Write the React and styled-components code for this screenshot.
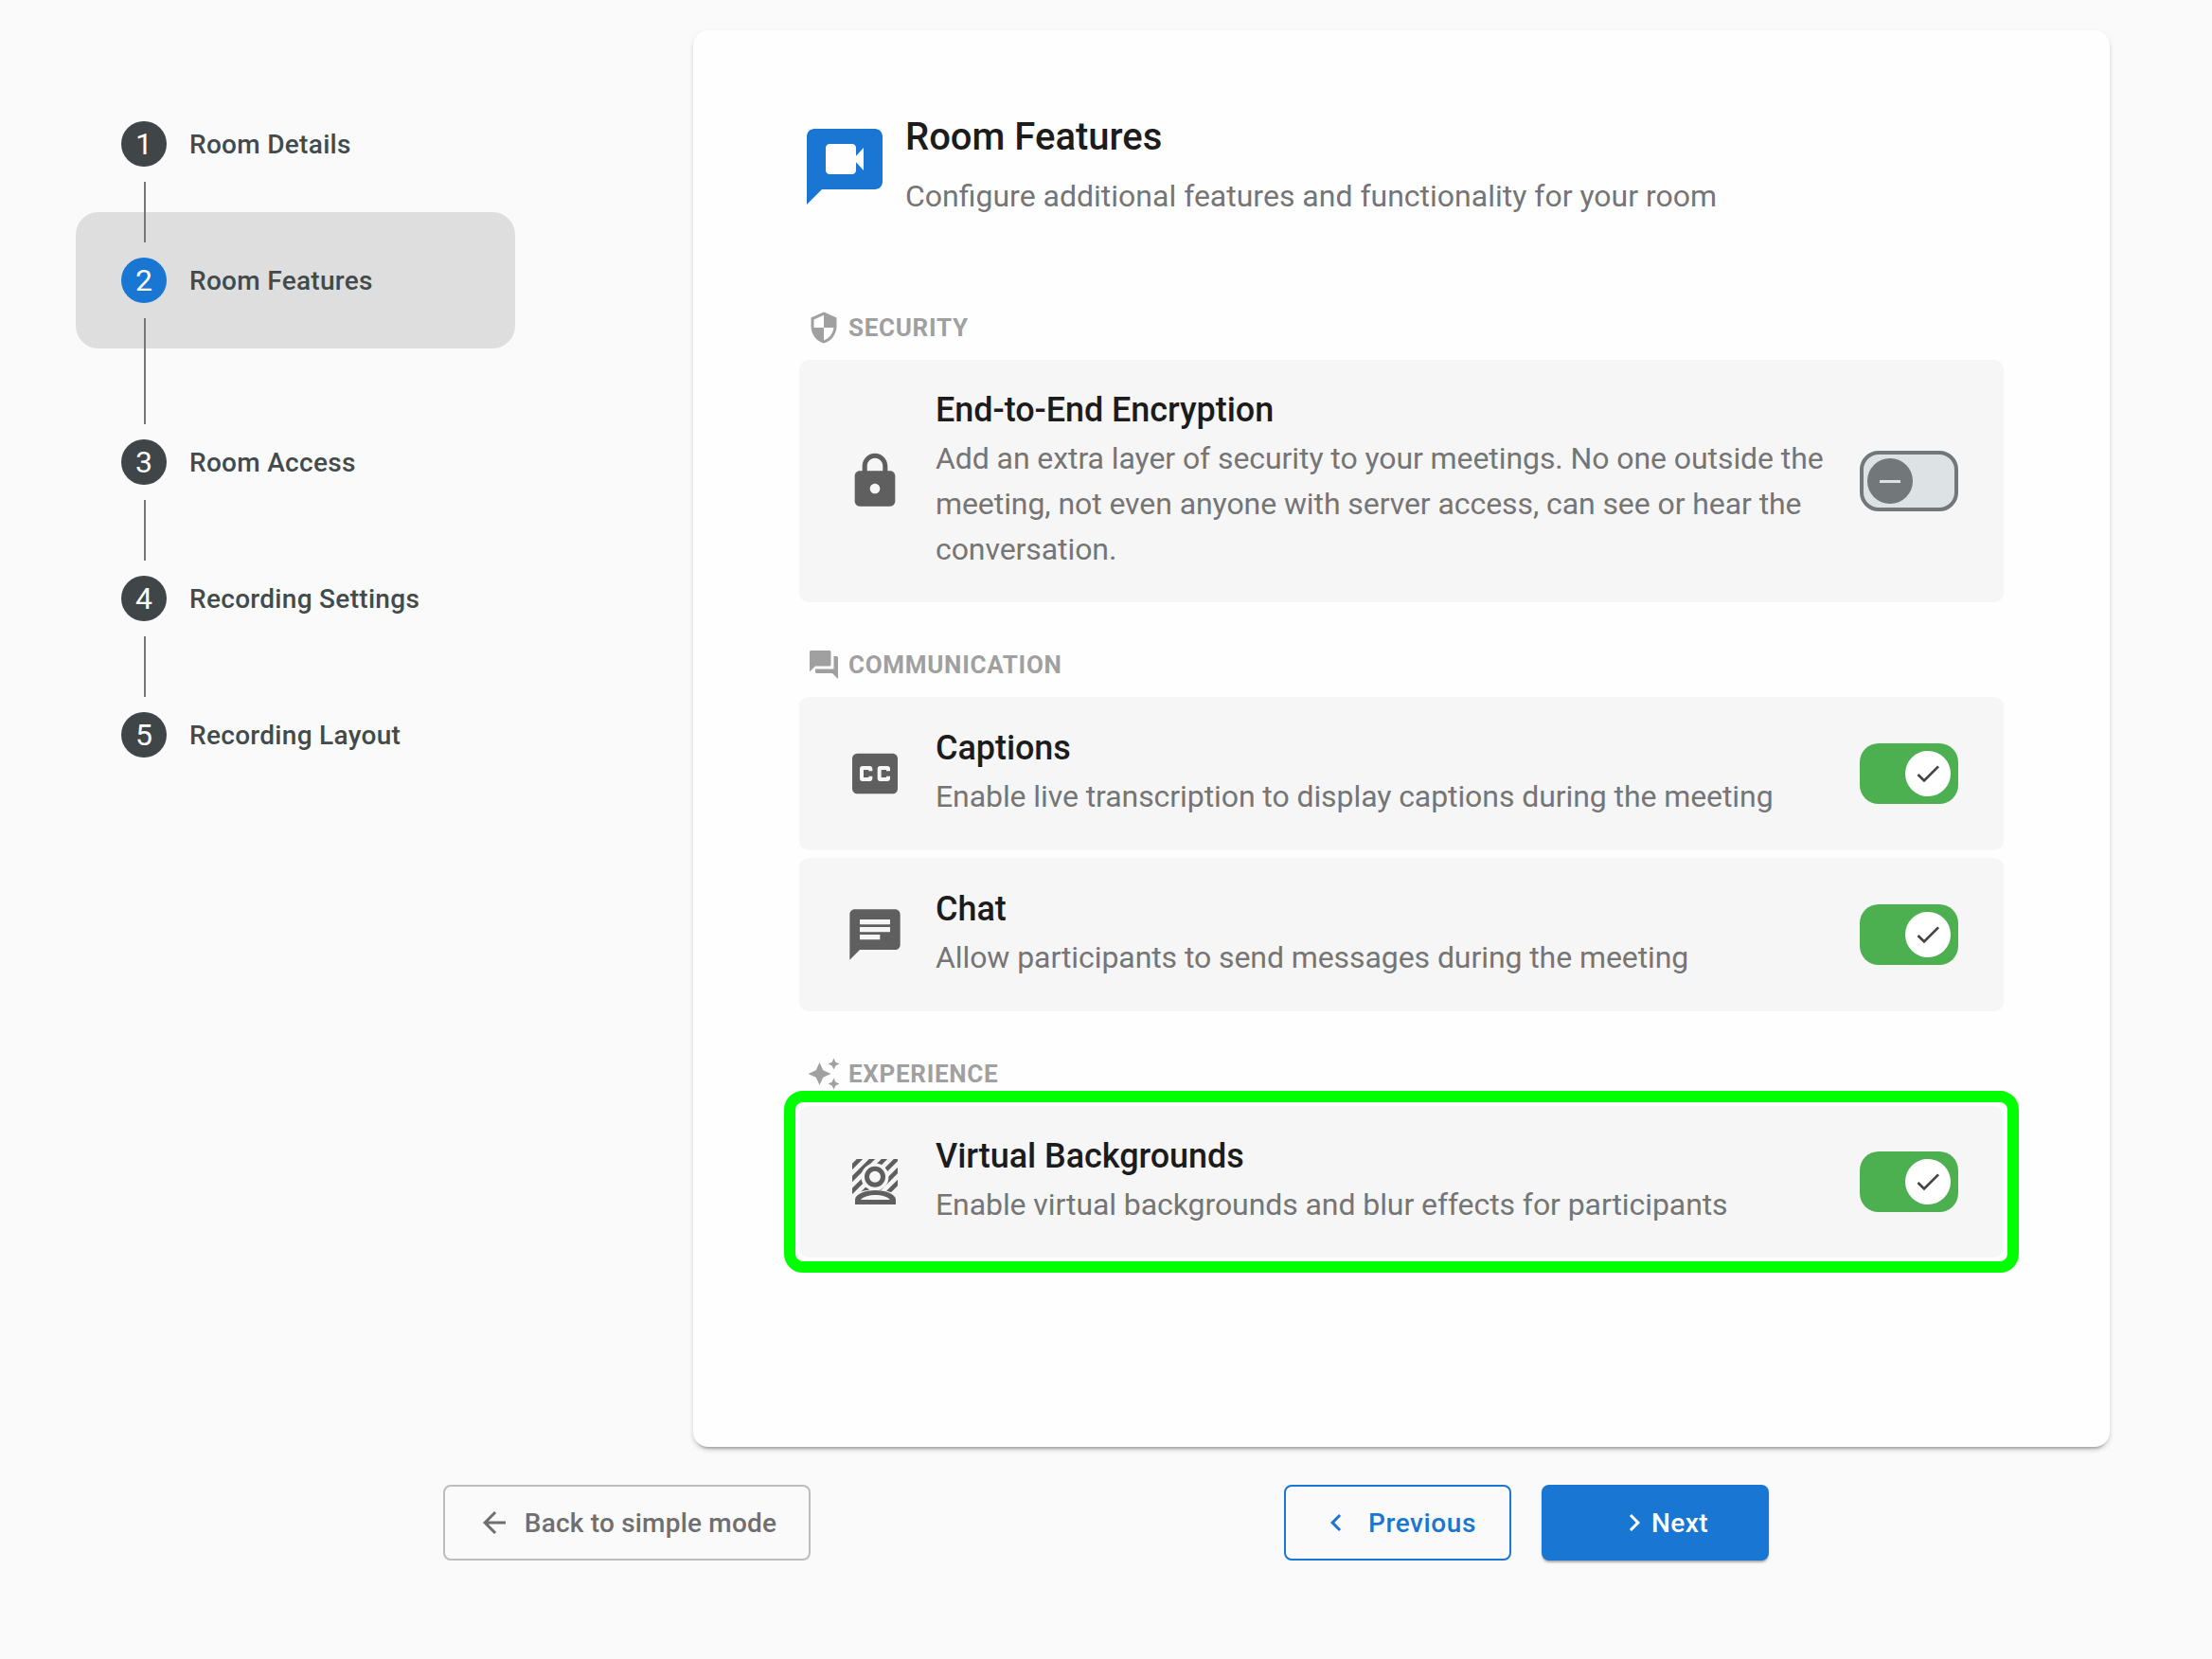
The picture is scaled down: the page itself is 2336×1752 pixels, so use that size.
import React from 'react';
import styled, { createGlobalStyle } from 'styled-components';
import {
  MdArrowBack,
  MdAutoAwesome,
  MdChat,
  MdCheck,
  MdChevronLeft,
  MdChevronRight,
  MdClosedCaption,
  MdForum,
  MdLock,
  MdSecurity,
} from 'react-icons/md';

const GlobalStyle = createGlobalStyle`
  html, body {
    margin: 0;
    padding: 0;
    background: #fafafa;
    font-family: Roboto, "Liberation Sans", sans-serif;
  }
  * {
    box-sizing: border-box;
  }
`;

const Page = styled.div`
  width: 2336px;
  height: 1752px;
  padding-top: 32px;
  background: #fafafa;
`;

const Main = styled.div`
  display: flex;
  align-items: flex-start;
  padding-left: 80px;
`;

const Sidebar = styled.nav`
  width: 464px;
  margin-right: 188px;
  padding-top: 48px;
  flex-shrink: 0;
`;

const Step = styled.div`
  position: relative;
  display: flex;
  align-items: center;
  gap: 24px;
  height: 144px;
  padding-left: 48px;
  border-radius: 24px;
  background: ${props => (props.$active ? '#dedede' : 'transparent')};
  margin-bottom: ${props => (props.$active ? '48px' : '0')};

  ${props => props.$line && `
    &::after {
      content: '';
      position: absolute;
      left: 72px;
      top: 112px;
      width: 2px;
      height: ${props.$line}px;
      background: #72787a;
      z-index: 1;
    }
  `}
`;

const StepNumber = styled.div`
  width: 48px;
  height: 48px;
  border-radius: 50%;
  display: flex;
  align-items: center;
  justify-content: center;
  flex-shrink: 0;
  font-size: 32px;
  color: #fff;
  background: ${props => (props.$active ? '#1976d2' : '#404648')};
`;

const StepLabel = styled.span`
  font-size: 28px;
  font-weight: 500;
  letter-spacing: 0.3px;
  color: #424a4c;
`;

const Card = styled.section`
  width: 1496px;
  height: 1496px;
  padding: 96px 112px 0;
  background: #fefefe;
  border-radius: 16px;
  box-shadow: 0 6px 2px -4px rgba(0, 0, 0, 0.2), 0 4px 4px 0 rgba(0, 0, 0, 0.1), 0 2px 6px 0 rgba(0, 0, 0, 0.08);
`;

const Header = styled.header`
  display: flex;
  gap: 16px;
  margin-bottom: 97px;
`;

const HeaderText = styled.div`
  display: flex;
  flex-direction: column;
`;

const Title = styled.h2`
  margin: 0;
  font-size: 40px;
  line-height: 34px;
  font-weight: 500;
  color: #1c1c1c;
`;

const Subtitle = styled.p`
  margin: 21px 0 0;
  font-size: 32px;
  line-height: 48px;
  color: #757575;
`;

const Section = styled.div`
  display: flex;
  flex-direction: column;
  gap: 8px;
  margin-bottom: 48px;
`;

const SectionHead = styled.div`
  display: flex;
  align-items: center;
  gap: 8px;
  padding-left: 8px;
  margin-bottom: 8px;
  color: #a0a0a0;
`;

const SectionLabel = styled.span`
  font-size: 26px;
  font-weight: 700;
  letter-spacing: 0.7px;
  color: #a0a0a0;
`;

const Row = styled.div`
  position: relative;
  display: flex;
  align-items: center;
  gap: 32px;
  min-height: ${props => (props.$highlight ? 160 : 162)}px;
  padding: 0 48px;
  background: #f6f6f6;
  border-radius: 10px;
  color: #5f5f5f;

  ${props => props.$highlight && `
    &::after {
      content: '';
      position: absolute;
      inset: -16px;
      border: 12px solid #00ff00;
      border-radius: 20px;
      pointer-events: none;
    }
  `}
`;

const RowText = styled.div`
  flex: 1;
  min-width: 0;
  padding: 30px 0 32px;
`;

const RowTitle = styled.div`
  font-size: 36px;
  line-height: 46px;
  margin-bottom: 4px;
  font-weight: 500;
  letter-spacing: -0.06px;
  color: #1c1c1c;
`;

const RowDescription = styled.div`
  font-size: 32px;
  line-height: 48px;
  letter-spacing: -0.08px;
  color: #757575;
`;

const Toggle = styled.div`
  width: 104px;
  height: 64px;
  flex-shrink: 0;
  display: flex;
  align-items: center;
  justify-content: ${props => (props.$on ? 'flex-end' : 'flex-start')};
  padding: 0 ${props => (props.$on ? 8 : 4)}px;
  border-radius: 20px;
  background: ${props => (props.$on ? '#4caf50' : '#dde3e5')};
  border: ${props => (props.$on ? 'none' : '4px solid #72787a')};
`;

const Thumb = styled.div`
  width: 48px;
  height: 48px;
  border-radius: 50%;
  display: flex;
  align-items: center;
  justify-content: center;
  background: ${props => (props.$on ? '#fff' : '#72787a')};
  color: #444;
`;

const Minus = styled.div`
  width: 22px;
  height: 3px;
  background: #dde3e5;
`;

const Footer = styled.footer`
  width: 1400px;
  margin: 40px auto 0;
  display: flex;
  justify-content: space-between;
`;

const FooterGroup = styled.div`
  display: flex;
  gap: 32px;
`;

const Button = styled.button`
  height: 80px;
  width: 240px;
  display: flex;
  align-items: center;
  justify-content: center;
  border-radius: 8px;
  font-family: inherit;
  font-size: 28px;
  font-weight: 500;
  background: transparent;
  padding: 0;
`;

const BackButton = styled(Button)`
  width: 388px;
  gap: 14px;
  letter-spacing: 0.2px;
  border: 2px solid #bdbdbd;
  color: #6f6f6f;
`;

const PreviousButton = styled(Button)`
  gap: 16px;
  letter-spacing: 0.6px;
  border: 2px solid #1976d2;
  color: #1976d2;
`;

const NextButton = styled(Button)`
  gap: 0;
  padding-left: 16px;
  letter-spacing: 0.4px;
  border: none;
  background: #1976d2;
  color: #fff;
  box-shadow: 0 3px 2px -1px rgba(0, 0, 0, 0.2), 0 2px 3px 0 rgba(0, 0, 0, 0.14);
`;

const RoomIcon = () => (
  <svg width="96" height="96" viewBox="0 0 24 24" fill="#1976d2">
    <path
      fillRule="evenodd"
      d="M20 2H4c-1.1 0-1.99.9-1.99 2L2 22l4-4h14c1.1 0 2-.9 2-2V4c0-1.1-.9-2-2-2zM8 6h6c.55 0 1 .45 1 1v2.2L17 7v6l-2-2.2V13c0 .55-.45 1-1 1H8c-.55 0-1-.45-1-1V7c0-.55.45-1 1-1z"
    />
  </svg>
);

const VirtualBackgroundIcon = () => (
  <svg width="64" height="64" viewBox="-8 -8 64 64" fill="none">
    <defs>
      <clipPath id="hatch">
        <rect x="0" y="0" width="48" height="40" />
      </clipPath>
    </defs>
    <g clipPath="url(#hatch)" stroke="#5f5f5f" strokeWidth="4.5">
      <path d="M-8 16L16 -8M-8 29L29 -8M-8 42L42 -8M5 42L55 -8M18 42L68 -8M31 42L81 -8" />
    </g>
    <circle cx="24" cy="19" r="14.5" fill="#f6f6f6" />
    <path d="M-2 48V40C8 30 40 30 50 40V48Z" fill="#f6f6f6" />
    <circle cx="24" cy="18.7" r="8.5" stroke="#5f5f5f" strokeWidth="5" />
    <path
      fillRule="evenodd"
      d="M3 48V43C3 37 14 33 24.5 33C35 33 46 37 46 43V48ZM9 43H40C37 39.500 31 38 24.500 38C18 38 12 39.500 9 43Z"
      fill="#5f5f5f"
    />
  </svg>
);

const STEPS = [
  { label: 'Room Details', line: 64 },
  { label: 'Room Features', line: 112, active: true },
  { label: 'Room Access', line: 64 },
  { label: 'Recording Settings', line: 64 },
  { label: 'Recording Layout' },
];

const SECTIONS = [
  {
    label: 'SECURITY',
    icon: <MdSecurity size={36} />,
    rows: [
      {
        icon: <MdLock size={64} />,
        title: 'End-to-End Encryption',
        description:
          'Add an extra layer of security to your meetings. No one outside the meeting, not even anyone with server access, can see or hear the conversation.',
      },
    ],
  },
  {
    label: 'COMMUNICATION',
    icon: <MdForum size={36} />,
    rows: [
      {
        icon: <MdClosedCaption size={64} />,
        title: 'Captions',
        description: 'Enable live transcription to display captions during the meeting',
        on: true,
      },
      {
        icon: <MdChat size={64} />,
        title: 'Chat',
        description: 'Allow participants to send messages during the meeting',
        on: true,
      },
    ],
  },
  {
    label: 'EXPERIENCE',
    icon: <MdAutoAwesome size={36} />,
    rows: [
      {
        icon: <VirtualBackgroundIcon />,
        title: 'Virtual Backgrounds',
        description: 'Enable virtual backgrounds and blur effects for participants',
        on: true,
        highlight: true,
      },
    ],
  },
];

const App = () => (
  <Page>
    <GlobalStyle />
    <Main>
      <Sidebar>
        {STEPS.map((step, i) => (
          <Step key={step.label} $active={step.active} $line={step.line}>
            <StepNumber $active={step.active}>{i + 1}</StepNumber>
            <StepLabel>{step.label}</StepLabel>
          </Step>
        ))}
      </Sidebar>

      <Card>
        <Header>
          <RoomIcon />
          <HeaderText>
            <Title>Room Features</Title>
            <Subtitle>Configure additional features and functionality for your room</Subtitle>
          </HeaderText>
        </Header>

        {SECTIONS.map(section => (
          <Section key={section.label}>
            <SectionHead>
              {section.icon}
              <SectionLabel>{section.label}</SectionLabel>
            </SectionHead>
            {section.rows.map(row => (
              <Row key={row.title} $highlight={row.highlight}>
                {row.icon}
                <RowText>
                  <RowTitle>{row.title}</RowTitle>
                  <RowDescription>{row.description}</RowDescription>
                </RowText>
                <Toggle $on={row.on}>
                  <Thumb $on={row.on}>
                    {row.on ? <MdCheck size={32} /> : <Minus />}
                  </Thumb>
                </Toggle>
              </Row>
            ))}
          </Section>
        ))}
      </Card>
    </Main>

    <Footer>
      <BackButton>
        <MdArrowBack size={36} />
        Back to simple mode
      </BackButton>
      <FooterGroup>
        <PreviousButton>
          <MdChevronLeft size={36} />
          Previous
        </PreviousButton>
        <NextButton>
          <MdChevronRight size={36} />
          Next
        </NextButton>
      </FooterGroup>
    </Footer>
  </Page>
);

export default App;
